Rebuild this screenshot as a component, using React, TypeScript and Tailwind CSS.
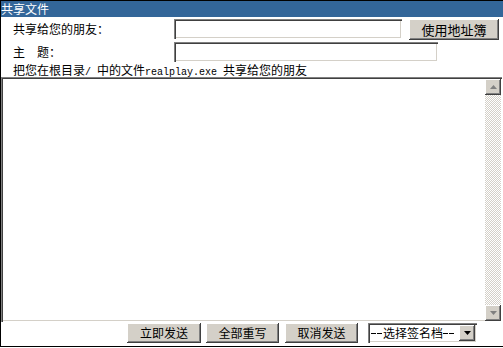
import React from "react";

const cjk = { fontFamily: '"SimSun","Noto Sans CJK SC","Noto Sans",sans-serif' };
const mono = { fontFamily: '"Liberation Mono","Courier New",monospace' };

const btn =
  "bg-[#d4d0c8] text-black text-[12px] leading-none flex items-center justify-center shadow-[inset_-1px_-1px_#404040,inset_1px_1px_#ffffff,inset_-2px_-2px_#808080,inset_2px_2px_#d4d0c8]";
const inset =
  "bg-white shadow-[inset_1px_1px_#808080,inset_2px_2px_#404040,inset_-1px_-1px_#ffffff,inset_-2px_-2px_#d4d0c8]";

function ArrowBtn({ up, dark }: { up?: boolean; dark?: boolean }) {
  return (
    <div className={`${btn} w-[16px] h-[16px]`}>
      <svg width="7" height="4" viewBox="0 0 7 4">
        {up ? (
          <polygon points="3.5,0 7,4 0,4" fill={dark ? "#000" : "#808080"} />
        ) : (
          <polygon points="0,0 7,0 3.5,4" fill={dark ? "#000" : "#808080"} />
        )}
      </svg>
    </div>
  );
}

function Ascii({ children }: { children: React.ReactNode }) {
  return (
    <span className="text-[10px] whitespace-pre" style={mono}>
      {children}
    </span>
  );
}

function Dashes() {
  return (
    <span className="inline-flex items-center gap-[1px] w-[12px]">
      <span className="block w-[5px] h-[1px] bg-black" />
      <span className="block w-[5px] h-[1px] bg-black" />
    </span>
  );
}

export default function App() {
  return (
    <div
      className="w-[503px] h-[347px] bg-white border-l border-t border-b border-black flex flex-col text-[12px] text-black"
      style={cjk}
    >
      <div className="h-[16px] bg-[#336699] text-white leading-[16px] shrink-0">共享文件</div>

      <div className="flex items-center h-[22px] mt-[1px]">
        <div className="w-[173px] pl-[12px] leading-none">共享给您的朋友：</div>
        <div className={`${inset} w-[228px] h-[20px]`} />
        <div className={`${btn} w-[90px] h-[21px] ml-[7px] text-[13px]`}>使用地址簿</div>
      </div>

      <div className="flex items-center h-[21px] mt-[1px]">
        <div className="w-[173px] pl-[12px] leading-none flex">
          <span>主</span>
          <span className="ml-[12px]">题：</span>
        </div>
        <div className={`${inset} w-[264px] h-[20px]`} />
      </div>

      <div className="h-[15px] pl-[12px] leading-[15px] whitespace-pre flex items-baseline">
        <span>把您在根目录</span>
        <Ascii>/ </Ascii>
        <span>中的文件</span>
        <Ascii>realplay.exe </Ascii>
        <span>共享给您的朋友</span>
      </div>

      <div className={`${inset} h-[245px] w-[501px] flex justify-end pt-[2px] pr-[1px] pb-[1px]`}>
        <div className="w-[16px] h-full flex flex-col bg-[repeating-conic-gradient(#d4d0c8_0_25%,#ffffff_0_50%)] bg-[length:2px_2px]">
          <ArrowBtn up />
          <div className="flex-1" />
          <ArrowBtn />
        </div>
      </div>

      <div className="flex items-center h-[22px]">
        <div className={`${btn} w-[74px] h-[20px] ml-[126px]`}>立即发送</div>
        <div className={`${btn} w-[73px] h-[20px] ml-[5px]`}>全部重写</div>
        <div className={`${btn} w-[73px] h-[20px] ml-[6px]`}>取消发送</div>
        <div className={`${inset} w-[109px] h-[20px] ml-[10px] flex items-center pl-[3px] pr-[2px]`}>
          <span className="flex-1 leading-none flex items-center">
            <Dashes />
            <span>选择签名档</span>
            <Dashes />
          </span>
          <ArrowBtn dark />
        </div>
      </div>
    </div>
  );
}
